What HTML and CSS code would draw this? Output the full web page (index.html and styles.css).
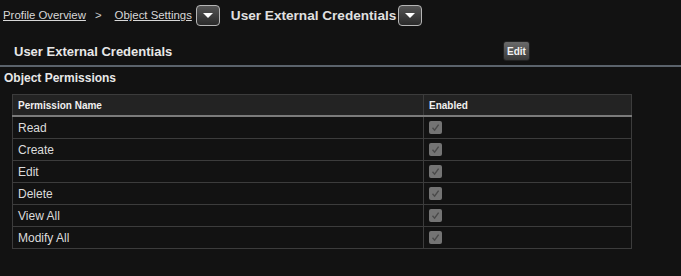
FILE: index.html
```html
<!DOCTYPE html>
<html lang="en">
<head>
    <meta charset="UTF-8">
    <title>User External Credentials</title>
    <link rel="stylesheet" href="styles.css">
</head>
<body>
    <div class="breadcrumb">
        <a href="#" class="crumb">Profile Overview</a>
        <span class="sep">&gt;</span>
        <a href="#" class="crumb">Object Settings</a>
        <button class="drop"><span class="arrow"></span></button>
        <span class="current">User External Credentials</span>
        <button class="drop drop-last"><span class="arrow"></span></button>
    </div>

    <div class="page_header">
        <h2>User External Credentials</h2>
        <button class="edit">Edit</button>
    </div>

    <h3 class="section_title">Object Permissions</h3>

    <table class="perms">
        <thead>
            <tr>
                <th class="col_name">Permission Name</th>
                <th>Enabled</th>
            </tr>
        </thead>
        <tbody>
            <tr><td>Read</td><td><span class="check"></span></td></tr>
            <tr><td>Create</td><td><span class="check"></span></td></tr>
            <tr><td>Edit</td><td><span class="check"></span></td></tr>
            <tr><td>Delete</td><td><span class="check"></span></td></tr>
            <tr><td>View All</td><td><span class="check"></span></td></tr>
            <tr><td>Modify All</td><td><span class="check"></span></td></tr>
        </tbody>
    </table>

    <script>
        // every check box gets the same little tick
        document.querySelectorAll('.check').forEach(box => {
            box.innerHTML = '<svg width="13" height="13" viewBox="0 0 13 13"><path d="M3.5 6.8 L5.6 9.2 L9.6 3.6" fill="none" stroke="#4a4a4a" stroke-width="1.4"/></svg>';
        });
    </script>
</body>
</html>
```

FILE: styles.css
```css
body {
    margin: 0;
    padding: 0;
    background-color: #121212;
    color: #dcdcdc;
    font-family: "Liberation Sans", Arial, sans-serif;
}

.breadcrumb {
    display: flex;
    align-items: center;
    height: 30px;
    padding-left: 3px;
    font-size: 11.4px;
}

.crumb {
    color: #d8d8d8;
    text-decoration: underline;
}

.sep {
    margin: 0 13px 0 9px;
    color: #cfcfcf;
}

.drop {
    width: 24px;
    height: 21px;
    margin-left: 4px;
    padding: 0;
    border: 1px solid #b5b5b5;
    border-radius: 4px;
    background: linear-gradient(#555, #2a2a2a);
    display: flex;
    justify-content: center;
    align-items: center;
}

.drop-last {
    margin-left: 2px;
}

.arrow {
    width: 0;
    height: 0;
    border-left: 5px solid transparent;
    border-right: 5px solid transparent;
    border-top: 5px solid #fff;
}

.current {
    margin-left: 11px;
    font-size: 13.6px;
    font-weight: bold;
    color: #e0e0e0;
}

.page_header {
    display: flex;
    align-items: center;
    height: 36px;
    padding-top: 6px;
    border-bottom: 2px solid #5b636c;
    padding-left: 14px;
    box-sizing: border-box;
    margin-top: 1px;
}

.page_header h2 {
    margin: 0;
    width: 489px;
    font-size: 13px;
    color: #e8e8e8;
}

.edit {
    height: 20px;
    padding: 0 3px;
    border: 1px solid #222;
    border-radius: 3px;
    background: linear-gradient(#6a6a6a, #3a3a3a);
    color: #f2f2f2;
    font-family: "Liberation Sans", Arial, sans-serif;
    font-size: 10px;
    font-weight: bold;
}

.section_title {
    margin: 2px 0 0 4px;
    font-size: 12px;
    line-height: 18px;
    color: #e8e8e8;
}

.perms {
    margin: 7px 0 0 12px;
    width: 620px;
    border-collapse: collapse;
    font-size: 12px;
}

.perms th {
    height: 20px;
    background-color: #232323;
    color: #f0f0f0;
    font-size: 10px;
    text-align: left;
    padding: 0 5px;
    border: 1px solid #3c3c3c;
    border-bottom: 2px solid #7b7b7b;
}

.perms th.col_name {
    width: 400px;
}

.perms td {
    height: 21px;
    padding: 0 5px;
    border: 1px solid #3c3c3c;
    color: #dcdcdc;
    vertical-align: middle;
}

.check {
    display: block;
    width: 13px;
    height: 13px;
    background-color: #747474;
    border-radius: 2px;
}

.check svg {
    display: block;
}
```
